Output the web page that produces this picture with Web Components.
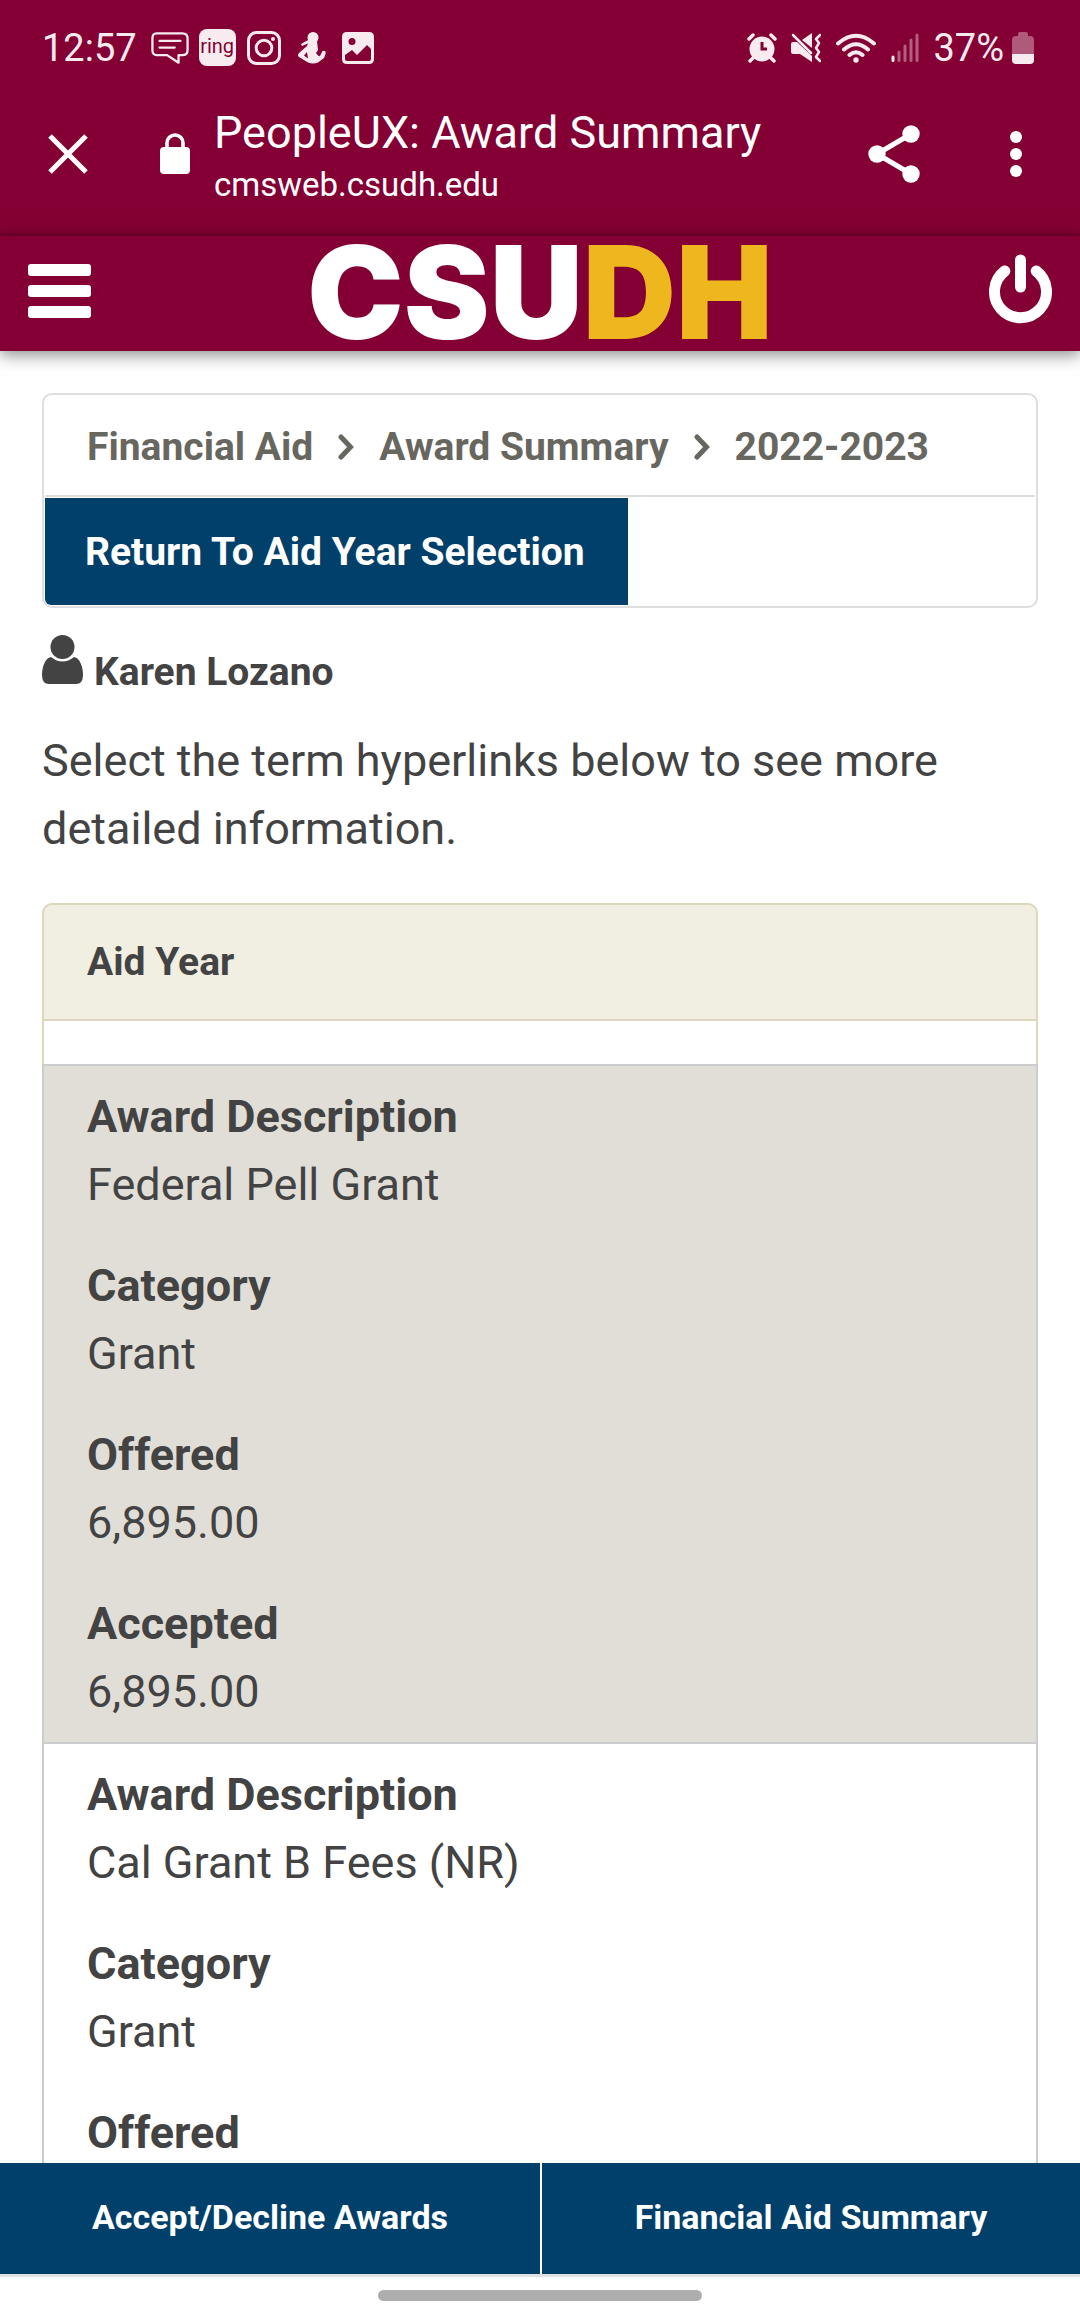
<!DOCTYPE html>
<html lang="en">
<head>
<meta charset="utf-8">
<title>PeopleUX: Award Summary</title>
<style>
html,body{margin:0;height:100%}
body{font-family:Roboto,"Liberation Sans",sans-serif;background:#fff;color:#434343;--maroon:#840034;--navy:#01406b}
</style>
</head>
<body>
<award-app></award-app>
<script>
const define=(name,html)=>{
  const t=document.createElement('template');
  t.innerHTML='<style>*{box-sizing:border-box}svg{display:block;flex:none}button,a{font:inherit;color:inherit;text-decoration:none}button{border:0;background:none;padding:0;margin:0;display:flex;cursor:pointer}</style>'+html;
  customElements.define(name,class extends HTMLElement{
    constructor(){super();this.attachShadow({mode:'open'}).append(t.content.cloneNode(true));}
  });
};

define('status-bar',`
<style>
:host{display:flex;justify-content:space-between;align-items:center;box-sizing:border-box;height:92px;padding:3px 46px 0 42px;background:var(--maroon);color:#f8ebf0;font-size:38px;line-height:48px}
div{display:flex;align-items:center}
.l{gap:10px}.l>span:first-child{margin-right:4px}.r{gap:14px}
.ring{width:37px;height:37px;border-radius:8px;background:#f8ebf0;color:var(--maroon);font-size:20px;line-height:34px;text-align:center}
</style>
<div class="l"><span>12:57</span>
<svg width="38" height="34" viewBox="0 0 40 34" fill="none" stroke="currentColor" stroke-width="2.4" stroke-linejoin="round" stroke-linecap="round"><path d="M6 1.500H33Q38.500 1.500 38.500 7V19Q38.500 24.500 33 24.500H29V32.500L17 24.500H6Q1.500 24.500 1.500 19V7Q1.500 1.500 6 1.500Z"/><path d="M9 9.500H31M9 16.500H25"/></svg>
<span class="ring">ring</span>
<svg width="36" height="34" viewBox="-1 0 36 34" fill="none" stroke="currentColor" stroke-width="3"><rect x="1.500" y="1.500" width="31" height="31" rx="8"/><circle cx="17" cy="17" r="7.800"/><circle cx="26" cy="8" r="2" fill="currentColor" stroke="none"/></svg>
<svg width="40" height="32" viewBox="-6 0 40 32" fill="currentColor"><circle cx="15" cy="5.500" r="5.500"/><path d="M12 7L3 12L4 14L11 11Z"/><path fill-rule="evenodd" d="M11 9H19L20 18L18 21Q21 25 22 24L24.500 19Q28.500 18 27.500 22L26 26L20 30.500Q15 32.500 10 30.500L1 25Q-1 23.500 1 21L9 14ZM9 20L6 23.500L10 26.500Z"/></svg>
<svg width="32" height="32" viewBox="0 0 32 32" fill="currentColor"><path fill-rule="evenodd" d="M5 0H27Q32 0 32 5V27Q32 32 27 32H5Q0 32 0 27V5Q0 0 5 0ZM10 6A3.500 3.500 0 1 0 10 13A3.500 3.500 0 1 0 10 6ZM3 23L10 18L15 23L25 13L29 17V27Q29 29 27 29H5Q3 29 3 27Z"/></svg>
</div>
<div class="r">
<svg width="30" height="30" viewBox="0 0 30 30"><circle cx="15" cy="16" r="12.500" fill="currentColor"/><g stroke="currentColor" stroke-width="3.500" stroke-linecap="round"><path d="M2 6L6 2M28 6L24 2M6 25L3 28M24 25L27 28"/></g><path d="M15 9V16H20" fill="none" stroke="#840034" stroke-width="3"/></svg>
<svg width="30" height="30" viewBox="0 0 30 30"><path d="M0 11Q0 9 2 9H6L21 23V29L9 21H2Q0 21 0 19ZM11 7L21 0V15Z" fill="currentColor"/><path d="M2 2L20 20" stroke="currentColor" stroke-width="2.500" stroke-linecap="round"/><path d="M29 2L25 6L28 10L25 15L28 19L25 24L29 28" fill="none" stroke="currentColor" stroke-width="2.500" stroke-linejoin="round" stroke-linecap="round"/></svg>
<svg width="42" height="30" viewBox="0 0 42 30" fill="none" stroke="currentColor" stroke-width="4" stroke-linecap="round"><path d="M3 10.500Q21 -5 39 10.500M9 16.500Q21 6 33 16.500M14.500 22Q21 16.500 27.500 22"/><circle cx="21" cy="27" r="2.700" fill="currentColor" stroke="none"/></svg>
<svg width="28" height="30" viewBox="0 0 28 30" fill="none" stroke="currentColor" stroke-width="3" stroke-linecap="round"><path d="M2 24V27.500"/><path opacity=".4" d="M8 19V27.500M14 13V27.500M20 7V27.500M26 2V27.500"/></svg>
<div style="gap:8px"><span>37%</span>
<svg width="22" height="32" viewBox="0 0 22 32"><path opacity=".38" fill="currentColor" d="M6 4V2Q6 0 8 0H14Q16 0 16 2V4H18Q22 4 22 8V22H0V8Q0 4 4 4Z"/><path fill="currentColor" d="M0 22H22V28Q22 32 18 32H4Q0 32 0 28Z"/></svg></div>
</div>`);

define('browser-bar',`
<style>
:host{display:flex;align-items:center;box-sizing:border-box;height:144px;padding:0 58px 18px 48px;background:var(--maroon);border-bottom:3px solid #78002f;color:#fff}
.x{margin-right:72px}.lock{margin-right:24px}
.t{flex:1;min-width:0;display:flex;flex-direction:column;white-space:nowrap;padding-top:7px}
.t b{font-weight:400;font-size:45px;line-height:56px}.t span{font-size:33px;line-height:48px}
.share{margin-right:90px}
</style>
<button class="x" aria-label="Close"><svg width="40" height="40" viewBox="0 0 40 40" stroke="#fff" stroke-width="5"><path d="M2 2L38 38M38 2L2 38"/></svg></button>
<svg class="lock" width="30" height="41" viewBox="0 0 30 41"><rect y="14" width="30" height="27" rx="4" fill="#fff"/><path d="M7 16V10A8 8 0 0 1 23 10V16" fill="none" stroke="#fff" stroke-width="3.600"/></svg>
<div class="t"><b>PeopleUX: Award Summary</b><span>cmsweb.csudh.edu</span></div>
<button class="share" aria-label="Share"><svg width="52" height="58" viewBox="0 0 52 58" fill="#fff"><path d="M43 9L9 29L43 49" fill="none" stroke="#fff" stroke-width="5"/><circle cx="43" cy="9" r="8.700"/><circle cx="9" cy="29" r="8.700"/><circle cx="43" cy="49" r="8.700"/></svg></button>
<button aria-label="More"><svg width="12" height="46" viewBox="0 0 12 46" fill="#fff"><circle cx="6" cy="6" r="6"/><circle cx="6" cy="23" r="6"/><circle cx="6" cy="40" r="6"/></svg></button>`);

define('site-header',`
<style>
:host{display:flex;align-items:center;justify-content:space-between;box-sizing:border-box;height:115px;padding:0 28px 4px;background:var(--maroon);color:#fff;box-shadow:0 3px 16px rgba(0,0,0,.5);z-index:1;position:relative}
.logo{font:900 129px/110px Inter,Roboto,sans-serif}.logo span{color:#efb71e}
</style>
<button aria-label="Menu"><svg width="63" height="56" viewBox="0 0 63 56" fill="#fff"><rect width="63" height="12" rx="3"/><rect y="21" width="63" height="12" rx="3"/><rect y="42" width="63" height="12" rx="3"/></svg></button>
<a class="logo" href="#">CSU<span>DH</span></a>
<button aria-label="Sign out"><svg width="63" height="75" viewBox="0 0 63 75" fill="none" stroke="#fff" stroke-width="11" stroke-linecap="round"><path d="M15.800 17A26 26 0 1 0 47.200 17M31.500 6V33"/></svg></button>`);

define('crumb-card',`
<style>
:host{display:block;border:2px solid #dedede;border-radius:10px;padding:1px;overflow:hidden;font-size:39px;font-weight:700}
nav{display:flex;align-items:center;gap:25px;height:101px;padding:2px 42px 0;color:#67665f;border-bottom:2px solid #dedede;margin-bottom:1px;white-space:nowrap}
button{height:107px;padding:0 43px 0 40px;align-items:center;background:var(--navy);color:#fff;border-radius:0 0 0 6px}
</style>
<nav aria-label="Breadcrumb"><a href="#">Financial Aid</a>
<svg width="16" height="26" viewBox="0 0 16 26" fill="none" stroke="currentColor" stroke-width="5" stroke-linecap="round"><path d="M3 3L12.500 13L3 23"/></svg>
<a href="#">Award Summary</a>
<svg width="16" height="26" viewBox="0 0 16 26" fill="none" stroke="currentColor" stroke-width="5" stroke-linecap="round"><path d="M3 3L12.500 13L3 23"/></svg>
<span>2022-2023</span></nav>
<button>Return To Aid Year Selection</button>`);

define('student-name',`
<style>
:host{display:flex;align-items:flex-start;gap:11px;font-size:39px;font-weight:700;line-height:46px;margin-top:27px}
span{padding-top:14px}
</style>
<svg width="41" height="49" viewBox="0 0 41 49" fill="currentColor"><circle cx="20.500" cy="12" r="12"/><path d="M9 22Q20.500 31 32 22C38 23 41 32 41 40Q41 49 34 49H7Q0 49 0 40C0 32 3 23 9 22Z"/></svg>
<span><slot></slot></span>`);

define('award-entry',`
<style>
:host{display:block;border:2px solid #ccc;border-bottom:0;background:var(--fill,#fff)}
</style><slot></slot>`);

customElements.define('award-field',class extends HTMLElement{
  constructor(){super();this.attachShadow({mode:'open'});}
  connectedCallback(){
    const v=this.getAttribute('value');
    this.shadowRoot.innerHTML='<style>:host{display:block;padding:17px 43px 16px;font-size:45px;line-height:68px}dl,dt,dd{margin:0}dt{font-weight:700}</style><dl><dt></dt></dl>';
    const dl=this.shadowRoot.querySelector('dl');
    dl.firstChild.textContent=this.getAttribute('label');
    if(v){const d=document.createElement('dd');d.textContent=v;dl.append(d);}
  }
});

define('aid-year',`
<style>
:host{display:block;margin-top:40px}
h2{margin:0;height:118px;padding:0 43px;display:flex;align-items:center;font-size:39px;line-height:46px;background:#f1eee2;border:2px solid #dcd8bd;border-radius:10px 10px 0 0}
.gap{height:43px;border:2px solid #dcd8bd;border-width:0 2px}
</style>
<h2>Aid Year</h2><div class="gap"></div><slot></slot>`);

define('action-bar',`
<style>
:host{display:grid;grid-template-columns:1fr 1fr;height:111px;background:var(--navy);color:#fff;font-size:34px;font-weight:700}
button{align-items:center;justify-content:center;padding-bottom:3px}
button:last-of-type{border-left:2px solid #fff}
</style>
<button>Accept/Decline Awards</button><button>Financial Aid Summary</button>`);

define('gesture-bar',`
<style>
:host{display:flex;justify-content:center;align-items:center;box-sizing:border-box;height:42px;padding-bottom:2px;border-top:3px solid #dfe2e3;background:#fff}
i{width:30%;height:11px;border-radius:6px;background:#aeaeae}
</style><i></i>`);

define('award-app',`
<style>
:host{display:flex;flex-direction:column;height:100vh;overflow:hidden}
status-bar,browser-bar,site-header,action-bar,gesture-bar{flex:none}
main{flex:1;min-height:0;overflow:hidden;padding:42px 42px 0}
p{margin:32px 0 0;font-size:45px;line-height:68px}
</style>
<status-bar></status-bar>
<browser-bar></browser-bar>
<site-header></site-header>
<main>
<crumb-card></crumb-card>
<student-name>Karen Lozano</student-name>
<p>Select the term hyperlinks below to see more detailed information.</p>
<aid-year>
<award-entry style="--fill:#e1ded8"><award-field label="Award Description" value="Federal Pell Grant"></award-field><award-field label="Category" value="Grant"></award-field><award-field label="Offered" value="6,895.00"></award-field><award-field label="Accepted" value="6,895.00"></award-field></award-entry>
<award-entry><award-field label="Award Description" value="Cal Grant B Fees (NR)"></award-field><award-field label="Category" value="Grant"></award-field><award-field label="Offered"></award-field></award-entry>
</aid-year>
</main>
<action-bar></action-bar>
<gesture-bar></gesture-bar>`);
</script>
</body>
</html>
